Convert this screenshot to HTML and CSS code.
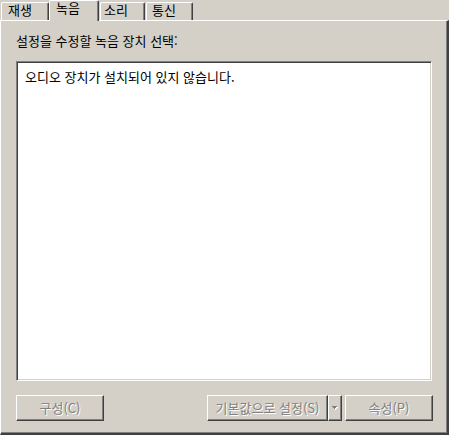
FILE: index.html
```html
<!DOCTYPE html>
<html lang="ko">
<head>
<meta charset="utf-8">
<title>소리 및 오디오 장치 - 녹음</title>
<link rel="stylesheet" href="styles.css">
</head>
<body>
<div class="dialog">
  <div class="tabs">
    <div class="tab tab-play">재생</div>
    <div class="tab tab-rec active">녹음</div>
    <div class="tab tab-sound">소리</div>
    <div class="tab tab-comm">통신</div>
  </div>
  <div class="panel">
    <div class="label">설정을 수정할 녹음 장치 선택:</div>
    <div class="list">
      <div class="empty">오디오 장치가 설치되어 있지 않습니다.</div>
    </div>
    <div class="buttons">
      <button class="btn btn-config" disabled>구성(C)</button>
      <div class="right-group">
        <div class="split">
          <button class="btn btn-default" disabled>기본값으로 설정(S)</button>
          <button class="btn btn-arrow" disabled><svg width="7" height="4" viewBox="0 0 7 4" shape-rendering="crispEdges"><rect x="1" y="1" width="5" height="1" fill="#ffffff"/><rect x="2" y="2" width="3" height="1" fill="#ffffff"/><rect x="3" y="3" width="1" height="1" fill="#ffffff"/><rect x="0" y="0" width="5" height="1" fill="#808080"/><rect x="1" y="1" width="3" height="1" fill="#808080"/><rect x="2" y="2" width="1" height="1" fill="#808080"/></svg></button>
        </div>
        <button class="btn btn-props" disabled>속성(P)</button>
      </div>
    </div>
  </div>
</div>
</body>
</html>
```

FILE: styles.css
```css
html, body {
  margin: 0;
  padding: 0;
}

body {
  width: 449px;
  height: 435px;
  overflow: hidden;
  background: #d4d0c8;
  font-family: "Noto Sans CJK KR", "Noto Sans", sans-serif;
  font-size: 13px;
  color: #000;
}

.dialog {
  display: flex;
  flex-direction: column;
  width: 449px;
  height: 435px;
}

.tabs {
  display: flex;
  align-items: flex-end;
  height: 20px;
  position: relative;
  z-index: 2;
}

.tab {
  box-sizing: border-box;
  height: 18px;
  margin-left: 1px;
  background: #d4d0c8;
  border-top: 1px solid #ffffff;
  border-left: 1px solid #ffffff;
  border-right: 1px solid #404040;
  box-shadow: inset -1px 0 #808080;
  border-radius: 2px 2px 0 0;
  line-height: 14px;
  white-space: nowrap;
}

.tab-play {
  width: 48px;
  padding-left: 6px;
}

.tab-rec {
  width: 50px;
  padding-left: 6px;
}

.tab-sound {
  width: 45px;
  padding-left: 3px;
}

.tab-comm {
  width: 47px;
  padding-left: 5px;
}

.tab.active {
  height: 21px;
  margin-bottom: -1px;
  margin-left: 0;
  position: relative;
  z-index: 3;
}

.panel {
  box-sizing: border-box;
  width: 449px;
  height: 415px;
  display: flex;
  flex-direction: column;
  padding: 0 14px 0 15px;
  border-top: 1px solid #ffffff;
  border-left: 1px solid #ffffff;
  border-right: 2px solid #404040;
  border-bottom: 2px solid #404040;
  box-shadow: inset -1px -1px #808080;
}

.label {
  margin-top: 13px;
  line-height: 14px;
  white-space: nowrap;
}

.list {
  box-sizing: border-box;
  width: 416px;
  height: 320px;
  margin-top: 13px;
  background: #ffffff;
  border-top: 1px solid #808080;
  border-left: 1px solid #808080;
  border-right: 1px solid #ffffff;
  border-bottom: 1px solid #ffffff;
  box-shadow: inset 1px 1px #404040, inset -1px -1px #d4d0c8;
  padding: 8px 8px;
}

.empty {
  line-height: 14px;
  white-space: nowrap;
}

.buttons {
  display: flex;
  justify-content: space-between;
  margin-top: 14px;
  width: 417px;
}

.right-group {
  display: flex;
  gap: 3px;
}

.split {
  display: flex;
}

.btn {
  box-sizing: border-box;
  height: 26px;
  margin: 0;
  padding: 0;
  background: #d4d0c8;
  border-top: 1px solid #ffffff;
  border-left: 1px solid #ffffff;
  border-right: 1px solid #404040;
  border-bottom: 1px solid #404040;
  box-shadow: inset -1px -1px #808080;
  font-family: "Noto Sans CJK KR", "Noto Sans", sans-serif;
  font-size: 13px;
  line-height: 14px;
  color: #808080;
  text-shadow: 1px 1px 0 #ffffff;
  display: flex;
  align-items: center;
  justify-content: center;
  white-space: nowrap;
}

.btn-config,
.btn-props {
  width: 88px;
}

.btn-default {
  width: 121px;
}

.btn-arrow {
  width: 14px;
}

.btn-arrow svg {
  display: block;
  margin-left: 1px;
}
```
